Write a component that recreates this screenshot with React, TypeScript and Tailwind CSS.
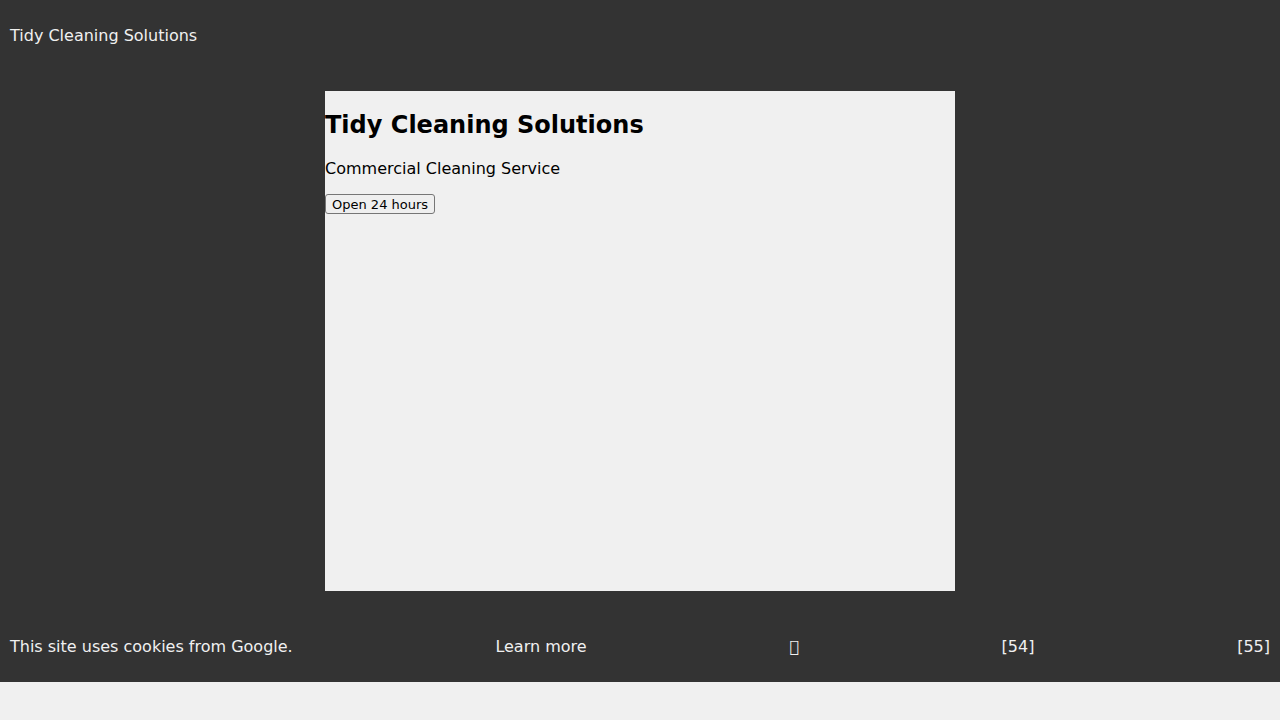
export default function App() {
  const footerItems = ["This site uses cookies from Google.", "Learn more", "\uf00d", "[54]", "[55]"];

  return (
    <div className="min-h-screen bg-[#f0f0f0] font-['DejaVu_Sans',sans-serif] text-[16px] leading-[normal]">
      <header className="bg-[#333333] px-[10px] py-[10px] text-[#f0f0f0]">
        <p className="my-4">Tidy Cleaning Solutions</p>
      </header>

      <main className="flex justify-center bg-[#333333] py-5">
        <div className="h-[500px] w-[630px] bg-[#f0f0f0] text-black">
          <h2 className="my-[20px] text-[24px] font-bold leading-[normal]">Tidy Cleaning Solutions</h2>
          <p className="my-4">Commercial Cleaning Service</p>
          <div className="my-4 flex">
            <button className="flex h-[20px] items-center rounded-[3px] border border-[#767676] bg-[#efefef] px-[6px] text-[13px] leading-[normal] text-black">
              Open 24 hours
            </button>
          </div>
        </div>
      </main>

      <footer className="flex items-center justify-between bg-[#333333] px-[10px] py-[10px] text-[#f0f0f0]">
        {footerItems.map((t) => (
          <p key={t} className="my-4">
            {t}
          </p>
        ))}
      </footer>
    </div>
  );
}
